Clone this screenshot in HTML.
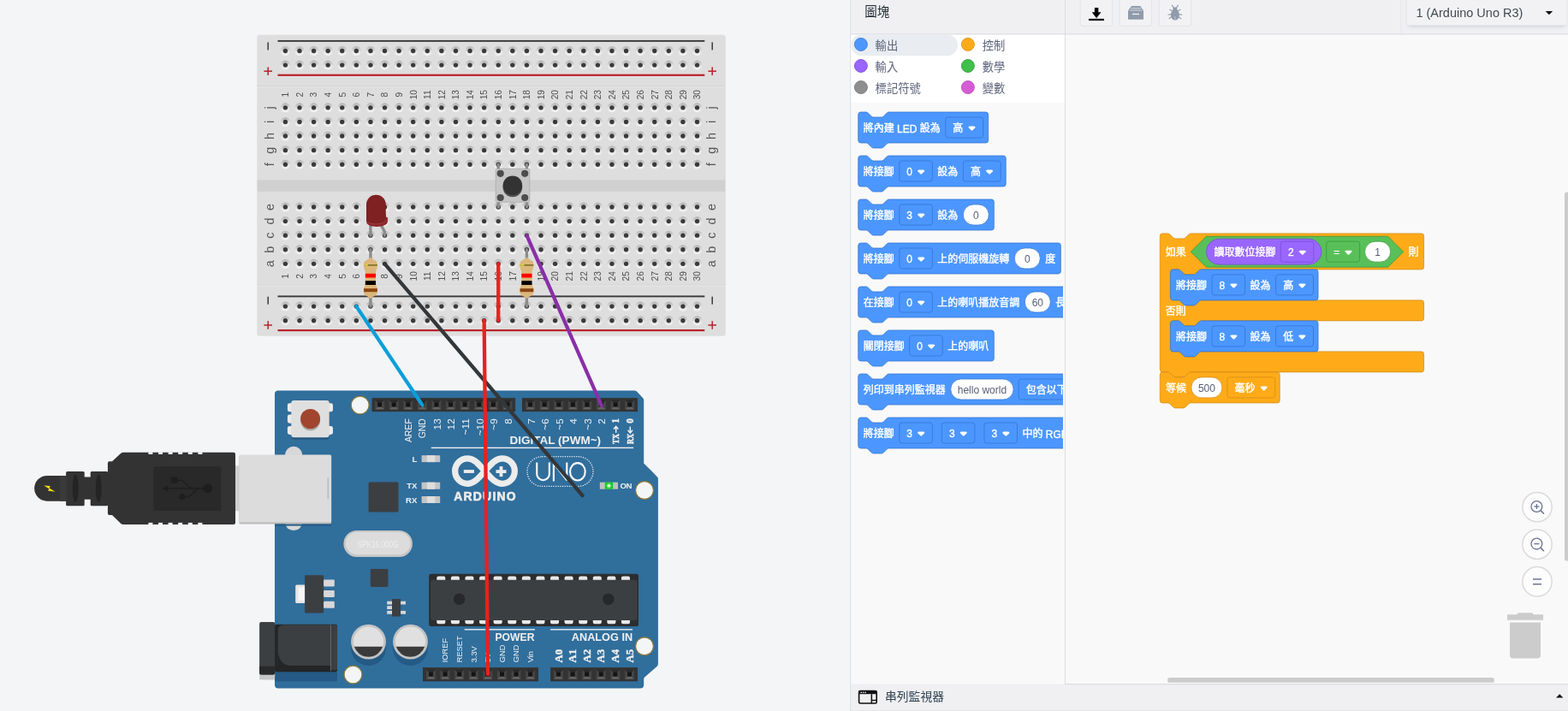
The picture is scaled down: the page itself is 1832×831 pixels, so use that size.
<!DOCTYPE html><html><head><meta charset="utf-8"><title>Circuit</title><style>html,body{margin:0;padding:0;background:#f4f5f7;overflow:hidden}svg{display:block;will-change:transform}text{font-family:"Liberation Sans","Noto Sans CJK TC",sans-serif}</style></head><body><svg width="1832" height="831" viewBox="0 0 1832 831"><rect width="1832" height="831" fill="#f4f5f7"/><defs><linearGradient id="hg" x1="0" y1="0" x2="0" y2="1"><stop offset="0" stop-color="#b2b2b2"/><stop offset="0.42" stop-color="#d4d4d4"/><stop offset="0.58" stop-color="#e6e6e6"/><stop offset="1" stop-color="#f5f5f5"/></linearGradient><g id="hole"><circle r="5.5" fill="url(#hg)"/><circle r="2.7" fill="#3a3a3a"/></g><g id="hrow"><use href="#hole" x="333.4"/><use href="#hole" x="349.99"/><use href="#hole" x="366.58"/><use href="#hole" x="383.17"/><use href="#hole" x="399.76"/><use href="#hole" x="416.35"/><use href="#hole" x="432.94"/><use href="#hole" x="449.53"/><use href="#hole" x="466.12"/><use href="#hole" x="482.71"/><use href="#hole" x="499.3"/><use href="#hole" x="515.89"/><use href="#hole" x="532.48"/><use href="#hole" x="549.07"/><use href="#hole" x="565.66"/><use href="#hole" x="582.25"/><use href="#hole" x="598.84"/><use href="#hole" x="615.43"/><use href="#hole" x="632.02"/><use href="#hole" x="648.61"/><use href="#hole" x="665.2"/><use href="#hole" x="681.79"/><use href="#hole" x="698.38"/><use href="#hole" x="714.97"/><use href="#hole" x="731.56"/><use href="#hole" x="748.15"/><use href="#hole" x="764.74"/><use href="#hole" x="781.33"/><use href="#hole" x="797.92"/><use href="#hole" x="814.51"/></g></defs><rect x="300" y="40.5" width="548" height="352.5" rx="3.5" fill="#e6e6e7"/><rect x="300.7" y="41.2" width="546.6" height="351.1" rx="3" fill="#dedede"/><rect x="300.7" y="210.2" width="546.6" height="13.6" fill="#d0d0d0"/><rect x="300.7" y="100" width="546.6" height="1" fill="#d3d3d3"/><rect x="300.7" y="101" width="546.6" height="1" fill="#e6e6e6"/><rect x="300.7" y="332.5" width="546.6" height="1" fill="#d3d3d3"/><rect x="300.7" y="333.5" width="546.6" height="1" fill="#e6e6e6"/><rect x="324.5" y="46.95" width="498.8" height="1.9" fill="#3a3a3a"/><rect x="324.5" y="86.7" width="498.8" height="2.2" fill="#b8232b"/><rect x="324.5" y="345.45" width="498.8" height="1.9" fill="#3a3a3a"/><rect x="324.5" y="385" width="498.8" height="2.2" fill="#b8232b"/><rect x="312.45" y="49.4" width="1.5" height="9" fill="#3a3a3a"/><rect x="312.45" y="78.4" width="1.5" height="9.6" fill="#b8232b"/><rect x="308.4" y="82.45" width="9.6" height="1.5" fill="#b8232b"/><rect x="312.45" y="346.7" width="1.5" height="9" fill="#3a3a3a"/><rect x="312.45" y="375.2" width="1.5" height="9.6" fill="#b8232b"/><rect x="308.4" y="379.25" width="9.6" height="1.5" fill="#b8232b"/><rect x="831.45" y="49.4" width="1.5" height="9" fill="#3a3a3a"/><rect x="831.45" y="78.4" width="1.5" height="9.6" fill="#b8232b"/><rect x="827.4" y="82.45" width="9.6" height="1.5" fill="#b8232b"/><rect x="831.45" y="346.7" width="1.5" height="9" fill="#3a3a3a"/><rect x="831.45" y="375.2" width="1.5" height="9.6" fill="#b8232b"/><rect x="827.4" y="379.25" width="9.6" height="1.5" fill="#b8232b"/><use href="#hrow" y="59.5"/><use href="#hrow" y="76.09"/><use href="#hrow" y="125.86"/><use href="#hrow" y="142.45"/><use href="#hrow" y="159.04"/><use href="#hrow" y="175.63"/><use href="#hrow" y="192.22"/><use href="#hrow" y="241.99"/><use href="#hrow" y="258.58"/><use href="#hrow" y="275.17"/><use href="#hrow" y="291.76"/><use href="#hrow" y="308.35"/><use href="#hrow" y="358.12"/><use href="#hrow" y="374.71"/><text transform="translate(337.2,110.7) rotate(-90)" font-size="10.2" fill="#505050" text-anchor="middle">1</text><text transform="translate(353.79,110.7) rotate(-90)" font-size="10.2" fill="#505050" text-anchor="middle">2</text><text transform="translate(370.38,110.7) rotate(-90)" font-size="10.2" fill="#505050" text-anchor="middle">3</text><text transform="translate(386.97,110.7) rotate(-90)" font-size="10.2" fill="#505050" text-anchor="middle">4</text><text transform="translate(403.56,110.7) rotate(-90)" font-size="10.2" fill="#505050" text-anchor="middle">5</text><text transform="translate(420.15,110.7) rotate(-90)" font-size="10.2" fill="#505050" text-anchor="middle">6</text><text transform="translate(436.74,110.7) rotate(-90)" font-size="10.2" fill="#505050" text-anchor="middle">7</text><text transform="translate(453.33,110.7) rotate(-90)" font-size="10.2" fill="#505050" text-anchor="middle">8</text><text transform="translate(469.92,110.7) rotate(-90)" font-size="10.2" fill="#505050" text-anchor="middle">9</text><text transform="translate(486.51,110.7) rotate(-90)" font-size="10.2" fill="#505050" text-anchor="middle">10</text><text transform="translate(503.1,110.7) rotate(-90)" font-size="10.2" fill="#505050" text-anchor="middle">11</text><text transform="translate(519.69,110.7) rotate(-90)" font-size="10.2" fill="#505050" text-anchor="middle">12</text><text transform="translate(536.28,110.7) rotate(-90)" font-size="10.2" fill="#505050" text-anchor="middle">13</text><text transform="translate(552.87,110.7) rotate(-90)" font-size="10.2" fill="#505050" text-anchor="middle">14</text><text transform="translate(569.46,110.7) rotate(-90)" font-size="10.2" fill="#505050" text-anchor="middle">15</text><text transform="translate(586.05,110.7) rotate(-90)" font-size="10.2" fill="#505050" text-anchor="middle">16</text><text transform="translate(602.64,110.7) rotate(-90)" font-size="10.2" fill="#505050" text-anchor="middle">17</text><text transform="translate(619.23,110.7) rotate(-90)" font-size="10.2" fill="#505050" text-anchor="middle">18</text><text transform="translate(635.82,110.7) rotate(-90)" font-size="10.2" fill="#505050" text-anchor="middle">19</text><text transform="translate(652.41,110.7) rotate(-90)" font-size="10.2" fill="#505050" text-anchor="middle">20</text><text transform="translate(669,110.7) rotate(-90)" font-size="10.2" fill="#505050" text-anchor="middle">21</text><text transform="translate(685.59,110.7) rotate(-90)" font-size="10.2" fill="#505050" text-anchor="middle">22</text><text transform="translate(702.18,110.7) rotate(-90)" font-size="10.2" fill="#505050" text-anchor="middle">23</text><text transform="translate(718.77,110.7) rotate(-90)" font-size="10.2" fill="#505050" text-anchor="middle">24</text><text transform="translate(735.36,110.7) rotate(-90)" font-size="10.2" fill="#505050" text-anchor="middle">25</text><text transform="translate(751.95,110.7) rotate(-90)" font-size="10.2" fill="#505050" text-anchor="middle">26</text><text transform="translate(768.54,110.7) rotate(-90)" font-size="10.2" fill="#505050" text-anchor="middle">27</text><text transform="translate(785.13,110.7) rotate(-90)" font-size="10.2" fill="#505050" text-anchor="middle">28</text><text transform="translate(801.72,110.7) rotate(-90)" font-size="10.2" fill="#505050" text-anchor="middle">29</text><text transform="translate(818.31,110.7) rotate(-90)" font-size="10.2" fill="#505050" text-anchor="middle">30</text><text transform="translate(337.2,322.8) rotate(-90)" font-size="10.2" fill="#505050" text-anchor="middle">1</text><text transform="translate(353.79,322.8) rotate(-90)" font-size="10.2" fill="#505050" text-anchor="middle">2</text><text transform="translate(370.38,322.8) rotate(-90)" font-size="10.2" fill="#505050" text-anchor="middle">3</text><text transform="translate(386.97,322.8) rotate(-90)" font-size="10.2" fill="#505050" text-anchor="middle">4</text><text transform="translate(403.56,322.8) rotate(-90)" font-size="10.2" fill="#505050" text-anchor="middle">5</text><text transform="translate(420.15,322.8) rotate(-90)" font-size="10.2" fill="#505050" text-anchor="middle">6</text><text transform="translate(436.74,322.8) rotate(-90)" font-size="10.2" fill="#505050" text-anchor="middle">7</text><text transform="translate(453.33,322.8) rotate(-90)" font-size="10.2" fill="#505050" text-anchor="middle">8</text><text transform="translate(469.92,322.8) rotate(-90)" font-size="10.2" fill="#505050" text-anchor="middle">9</text><text transform="translate(486.51,322.8) rotate(-90)" font-size="10.2" fill="#505050" text-anchor="middle">10</text><text transform="translate(503.1,322.8) rotate(-90)" font-size="10.2" fill="#505050" text-anchor="middle">11</text><text transform="translate(519.69,322.8) rotate(-90)" font-size="10.2" fill="#505050" text-anchor="middle">12</text><text transform="translate(536.28,322.8) rotate(-90)" font-size="10.2" fill="#505050" text-anchor="middle">13</text><text transform="translate(552.87,322.8) rotate(-90)" font-size="10.2" fill="#505050" text-anchor="middle">14</text><text transform="translate(569.46,322.8) rotate(-90)" font-size="10.2" fill="#505050" text-anchor="middle">15</text><text transform="translate(586.05,322.8) rotate(-90)" font-size="10.2" fill="#505050" text-anchor="middle">16</text><text transform="translate(602.64,322.8) rotate(-90)" font-size="10.2" fill="#505050" text-anchor="middle">17</text><text transform="translate(619.23,322.8) rotate(-90)" font-size="10.2" fill="#505050" text-anchor="middle">18</text><text transform="translate(635.82,322.8) rotate(-90)" font-size="10.2" fill="#505050" text-anchor="middle">19</text><text transform="translate(652.41,322.8) rotate(-90)" font-size="10.2" fill="#505050" text-anchor="middle">20</text><text transform="translate(669,322.8) rotate(-90)" font-size="10.2" fill="#505050" text-anchor="middle">21</text><text transform="translate(685.59,322.8) rotate(-90)" font-size="10.2" fill="#505050" text-anchor="middle">22</text><text transform="translate(702.18,322.8) rotate(-90)" font-size="10.2" fill="#505050" text-anchor="middle">23</text><text transform="translate(718.77,322.8) rotate(-90)" font-size="10.2" fill="#505050" text-anchor="middle">24</text><text transform="translate(735.36,322.8) rotate(-90)" font-size="10.2" fill="#505050" text-anchor="middle">25</text><text transform="translate(751.95,322.8) rotate(-90)" font-size="10.2" fill="#505050" text-anchor="middle">26</text><text transform="translate(768.54,322.8) rotate(-90)" font-size="10.2" fill="#505050" text-anchor="middle">27</text><text transform="translate(785.13,322.8) rotate(-90)" font-size="10.2" fill="#505050" text-anchor="middle">28</text><text transform="translate(801.72,322.8) rotate(-90)" font-size="10.2" fill="#505050" text-anchor="middle">29</text><text transform="translate(818.31,322.8) rotate(-90)" font-size="10.2" fill="#505050" text-anchor="middle">30</text><text transform="translate(320.2,125.86) rotate(-90)" font-size="14.4" fill="#555555" text-anchor="middle">j</text><text transform="translate(835.8,125.86) rotate(-90)" font-size="14.4" fill="#555555" text-anchor="middle">j</text><text transform="translate(320.2,142.45) rotate(-90)" font-size="14.4" fill="#555555" text-anchor="middle">i</text><text transform="translate(835.8,142.45) rotate(-90)" font-size="14.4" fill="#555555" text-anchor="middle">i</text><text transform="translate(320.2,159.04) rotate(-90)" font-size="14.4" fill="#555555" text-anchor="middle">h</text><text transform="translate(835.8,159.04) rotate(-90)" font-size="14.4" fill="#555555" text-anchor="middle">h</text><text transform="translate(320.2,175.63) rotate(-90)" font-size="14.4" fill="#555555" text-anchor="middle">g</text><text transform="translate(835.8,175.63) rotate(-90)" font-size="14.4" fill="#555555" text-anchor="middle">g</text><text transform="translate(320.2,192.22) rotate(-90)" font-size="14.4" fill="#555555" text-anchor="middle">f</text><text transform="translate(835.8,192.22) rotate(-90)" font-size="14.4" fill="#555555" text-anchor="middle">f</text><text transform="translate(320.2,241.99) rotate(-90)" font-size="14.4" fill="#555555" text-anchor="middle">e</text><text transform="translate(835.8,241.99) rotate(-90)" font-size="14.4" fill="#555555" text-anchor="middle">e</text><text transform="translate(320.2,258.58) rotate(-90)" font-size="14.4" fill="#555555" text-anchor="middle">d</text><text transform="translate(835.8,258.58) rotate(-90)" font-size="14.4" fill="#555555" text-anchor="middle">d</text><text transform="translate(320.2,275.17) rotate(-90)" font-size="14.4" fill="#555555" text-anchor="middle">c</text><text transform="translate(835.8,275.17) rotate(-90)" font-size="14.4" fill="#555555" text-anchor="middle">c</text><text transform="translate(320.2,291.76) rotate(-90)" font-size="14.4" fill="#555555" text-anchor="middle">b</text><text transform="translate(835.8,291.76) rotate(-90)" font-size="14.4" fill="#555555" text-anchor="middle">b</text><text transform="translate(320.2,308.35) rotate(-90)" font-size="14.4" fill="#555555" text-anchor="middle">a</text><text transform="translate(835.8,308.35) rotate(-90)" font-size="14.4" fill="#555555" text-anchor="middle">a</text><path d="M432.94,262 V275.17" stroke="#8c8c8c" stroke-width="3.3" stroke-linecap="round" fill="none"/><path d="M444.6,262 L449.33,270.6 V275.17" stroke="#8c8c8c" stroke-width="3.3" stroke-linecap="round" stroke-linejoin="round" fill="none"/><path d="M428,250 H450.8 V253.8 H452 Q452.9,253.8 452.9,254.8 V259 C452.9,262.5 447,264.9 440.2,264.9 C433,264.9 428,262.5 428,259Z" fill="#8d2529"/><path d="M428,257.5 V239.1 A11.4,11.4 0 0 1 450.8,239.1 V256.5 C450.8,259.8 446,261.7 439.6,261.7 C433,261.7 428,260.1 428,257.5Z" fill="#7f2022"/><path d="M428.2,257.6 C428.4,260.2 433,261.9 439.6,261.9 C446,261.9 450.6,260 450.8,256.6" fill="none" stroke="#a6474a" stroke-width="0.8"/><line x1="432.94" y1="291.76" x2="432.94" y2="358.12" stroke="#8c8c8c" stroke-width="3.4" stroke-linecap="round"/><path d="M432.94,300.4 C434.94,303.4 440.84,303.9 440.84,307.9 L440.84,311.9 C440.84,314.4 439.04,315.9 439.04,317.9 L439.04,331.7 C439.04,333.7 440.84,335.2 440.84,337.7 L440.84,341.7 C440.84,345.7 434.94,346.2 432.94,349.2 C430.94,346.2 425.04,345.7 425.04,341.7 L425.04,337.7 C425.04,335.2 426.84,333.7 426.84,331.7 L426.84,317.9 C426.84,315.9 425.04,314.4 425.04,311.9 L425.04,307.9 C425.04,303.9 430.94,303.4 432.94,300.4Z" fill="#dcb77a"/><rect x="425.04" y="309" width="15.8" height="1.8" fill="#85772e"/><rect x="425.04" y="309" width="5" height="1.8" fill="#d8c840"/><rect x="426.84" y="319.8" width="12.2" height="4.7" fill="#ff0000"/><rect x="426.84" y="328.2" width="12.2" height="4.8" fill="#000"/><rect x="425.04" y="337.2" width="15.8" height="4" fill="#8b4513"/><line x1="615.43" y1="291.76" x2="615.43" y2="358.12" stroke="#8c8c8c" stroke-width="3.4" stroke-linecap="round"/><path d="M615.43,300.4 C617.43,303.4 623.33,303.9 623.33,307.9 L623.33,311.9 C623.33,314.4 621.53,315.9 621.53,317.9 L621.53,331.7 C621.53,333.7 623.33,335.2 623.33,337.7 L623.33,341.7 C623.33,345.7 617.43,346.2 615.43,349.2 C613.43,346.2 607.53,345.7 607.53,341.7 L607.53,337.7 C607.53,335.2 609.33,333.7 609.33,331.7 L609.33,317.9 C609.33,315.9 607.53,314.4 607.53,311.9 L607.53,307.9 C607.53,303.9 613.43,303.4 615.43,300.4Z" fill="#dcb77a"/><rect x="607.53" y="309" width="15.8" height="1.8" fill="#85772e"/><rect x="607.53" y="309" width="5" height="1.8" fill="#d8c840"/><rect x="609.33" y="319.8" width="12.2" height="4.7" fill="#ff0000"/><rect x="609.33" y="328.2" width="12.2" height="4.8" fill="#000"/><rect x="607.53" y="337.2" width="15.8" height="4" fill="#8b4513"/><line x1="582.25" y1="192.22" x2="582.25" y2="241.99" stroke="#8c8c8c" stroke-width="3.4" stroke-linecap="round"/><line x1="615.43" y1="192.22" x2="615.43" y2="241.99" stroke="#8c8c8c" stroke-width="3.4" stroke-linecap="round"/><rect x="579.2" y="197.3" width="39.6" height="39" rx="1.5" fill="#c6c6c6" stroke="#aaaaaa" stroke-width="0.8"/><circle cx="584.7" cy="202.8" r="4.1" fill="#4d4d4d"/><circle cx="584.7" cy="231" r="4.1" fill="#4d4d4d"/><circle cx="613.2" cy="202.8" r="4.1" fill="#4d4d4d"/><circle cx="613.2" cy="231" r="4.1" fill="#4d4d4d"/><circle cx="598.9" cy="218.9" r="11.3" fill="#4f4f4f"/><circle cx="598.9" cy="216.7" r="11.3" fill="#333333"/><path d="M325,456.6 H741.5 Q743,456.6 744,457.6 L751.2,465.3 Q752.2,466.4 752.2,468 V541.4 L768,557.4 Q768.9,558.3 768.9,559.6 V776 Q768.9,777.4 768,778.4 L753.2,791.4 Q752.2,792.3 752.2,793.6 V800.4 Q752.2,804.4 748.2,804.4 H325 Q321,804.4 321,800.4 V460.3 Q321,456.6 325,456.6Z" fill="#306e9c"/><circle cx="420.7" cy="473.5" r="10.4" fill="#f4f5f7" stroke="#8c7a38" stroke-width="1.1"/><circle cx="753" cy="573" r="10.4" fill="#f4f5f7" stroke="#8c7a38" stroke-width="1.1"/><circle cx="753" cy="755.3" r="10.4" fill="#f4f5f7" stroke="#8c7a38" stroke-width="1.1"/><circle cx="412.5" cy="788.5" r="10.4" fill="#f4f5f7" stroke="#8c7a38" stroke-width="1.1"/><rect x="434.5" y="465.1" width="167.6" height="16" fill="#333333"/><g transform="translate(443.6,473.1)"><path d="M-5.5,-5.5 H5.5 L2.4,-2.4 H-2.4Z" fill="#2a2a2a"/><path d="M-5.5,5.5 H5.5 L2.4,2.4 H-2.4Z" fill="#636363"/><path d="M-5.5,-5.5 V5.5 L-2.4,2.4 V-2.4Z" fill="#454545"/><path d="M5.5,-5.5 V5.5 L2.4,2.4 V-2.4Z" fill="#454545"/><rect x="-2.4" y="-2.4" width="4.8" height="4.8" fill="#141414"/></g><g transform="translate(460.19,473.1)"><path d="M-5.5,-5.5 H5.5 L2.4,-2.4 H-2.4Z" fill="#2a2a2a"/><path d="M-5.5,5.5 H5.5 L2.4,2.4 H-2.4Z" fill="#636363"/><path d="M-5.5,-5.5 V5.5 L-2.4,2.4 V-2.4Z" fill="#454545"/><path d="M5.5,-5.5 V5.5 L2.4,2.4 V-2.4Z" fill="#454545"/><rect x="-2.4" y="-2.4" width="4.8" height="4.8" fill="#141414"/></g><g transform="translate(476.78,473.1)"><path d="M-5.5,-5.5 H5.5 L2.4,-2.4 H-2.4Z" fill="#2a2a2a"/><path d="M-5.5,5.5 H5.5 L2.4,2.4 H-2.4Z" fill="#636363"/><path d="M-5.5,-5.5 V5.5 L-2.4,2.4 V-2.4Z" fill="#454545"/><path d="M5.5,-5.5 V5.5 L2.4,2.4 V-2.4Z" fill="#454545"/><rect x="-2.4" y="-2.4" width="4.8" height="4.8" fill="#141414"/></g><g transform="translate(493.37,473.1)"><path d="M-5.5,-5.5 H5.5 L2.4,-2.4 H-2.4Z" fill="#2a2a2a"/><path d="M-5.5,5.5 H5.5 L2.4,2.4 H-2.4Z" fill="#636363"/><path d="M-5.5,-5.5 V5.5 L-2.4,2.4 V-2.4Z" fill="#454545"/><path d="M5.5,-5.5 V5.5 L2.4,2.4 V-2.4Z" fill="#454545"/><rect x="-2.4" y="-2.4" width="4.8" height="4.8" fill="#141414"/></g><g transform="translate(509.96,473.1)"><path d="M-5.5,-5.5 H5.5 L2.4,-2.4 H-2.4Z" fill="#2a2a2a"/><path d="M-5.5,5.5 H5.5 L2.4,2.4 H-2.4Z" fill="#636363"/><path d="M-5.5,-5.5 V5.5 L-2.4,2.4 V-2.4Z" fill="#454545"/><path d="M5.5,-5.5 V5.5 L2.4,2.4 V-2.4Z" fill="#454545"/><rect x="-2.4" y="-2.4" width="4.8" height="4.8" fill="#141414"/></g><g transform="translate(526.55,473.1)"><path d="M-5.5,-5.5 H5.5 L2.4,-2.4 H-2.4Z" fill="#2a2a2a"/><path d="M-5.5,5.5 H5.5 L2.4,2.4 H-2.4Z" fill="#636363"/><path d="M-5.5,-5.5 V5.5 L-2.4,2.4 V-2.4Z" fill="#454545"/><path d="M5.5,-5.5 V5.5 L2.4,2.4 V-2.4Z" fill="#454545"/><rect x="-2.4" y="-2.4" width="4.8" height="4.8" fill="#141414"/></g><g transform="translate(543.14,473.1)"><path d="M-5.5,-5.5 H5.5 L2.4,-2.4 H-2.4Z" fill="#2a2a2a"/><path d="M-5.5,5.5 H5.5 L2.4,2.4 H-2.4Z" fill="#636363"/><path d="M-5.5,-5.5 V5.5 L-2.4,2.4 V-2.4Z" fill="#454545"/><path d="M5.5,-5.5 V5.5 L2.4,2.4 V-2.4Z" fill="#454545"/><rect x="-2.4" y="-2.4" width="4.8" height="4.8" fill="#141414"/></g><g transform="translate(559.73,473.1)"><path d="M-5.5,-5.5 H5.5 L2.4,-2.4 H-2.4Z" fill="#2a2a2a"/><path d="M-5.5,5.5 H5.5 L2.4,2.4 H-2.4Z" fill="#636363"/><path d="M-5.5,-5.5 V5.5 L-2.4,2.4 V-2.4Z" fill="#454545"/><path d="M5.5,-5.5 V5.5 L2.4,2.4 V-2.4Z" fill="#454545"/><rect x="-2.4" y="-2.4" width="4.8" height="4.8" fill="#141414"/></g><g transform="translate(576.32,473.1)"><path d="M-5.5,-5.5 H5.5 L2.4,-2.4 H-2.4Z" fill="#2a2a2a"/><path d="M-5.5,5.5 H5.5 L2.4,2.4 H-2.4Z" fill="#636363"/><path d="M-5.5,-5.5 V5.5 L-2.4,2.4 V-2.4Z" fill="#454545"/><path d="M5.5,-5.5 V5.5 L2.4,2.4 V-2.4Z" fill="#454545"/><rect x="-2.4" y="-2.4" width="4.8" height="4.8" fill="#141414"/></g><g transform="translate(592.91,473.1)"><path d="M-5.5,-5.5 H5.5 L2.4,-2.4 H-2.4Z" fill="#2a2a2a"/><path d="M-5.5,5.5 H5.5 L2.4,2.4 H-2.4Z" fill="#636363"/><path d="M-5.5,-5.5 V5.5 L-2.4,2.4 V-2.4Z" fill="#454545"/><path d="M5.5,-5.5 V5.5 L2.4,2.4 V-2.4Z" fill="#454545"/><rect x="-2.4" y="-2.4" width="4.8" height="4.8" fill="#141414"/></g><rect x="610" y="465.1" width="135" height="16" fill="#333333"/><g transform="translate(619.6,473.1)"><path d="M-5.5,-5.5 H5.5 L2.4,-2.4 H-2.4Z" fill="#2a2a2a"/><path d="M-5.5,5.5 H5.5 L2.4,2.4 H-2.4Z" fill="#636363"/><path d="M-5.5,-5.5 V5.5 L-2.4,2.4 V-2.4Z" fill="#454545"/><path d="M5.5,-5.5 V5.5 L2.4,2.4 V-2.4Z" fill="#454545"/><rect x="-2.4" y="-2.4" width="4.8" height="4.8" fill="#141414"/></g><g transform="translate(636.19,473.1)"><path d="M-5.5,-5.5 H5.5 L2.4,-2.4 H-2.4Z" fill="#2a2a2a"/><path d="M-5.5,5.5 H5.5 L2.4,2.4 H-2.4Z" fill="#636363"/><path d="M-5.5,-5.5 V5.5 L-2.4,2.4 V-2.4Z" fill="#454545"/><path d="M5.5,-5.5 V5.5 L2.4,2.4 V-2.4Z" fill="#454545"/><rect x="-2.4" y="-2.4" width="4.8" height="4.8" fill="#141414"/></g><g transform="translate(652.78,473.1)"><path d="M-5.5,-5.5 H5.5 L2.4,-2.4 H-2.4Z" fill="#2a2a2a"/><path d="M-5.5,5.5 H5.5 L2.4,2.4 H-2.4Z" fill="#636363"/><path d="M-5.5,-5.5 V5.5 L-2.4,2.4 V-2.4Z" fill="#454545"/><path d="M5.5,-5.5 V5.5 L2.4,2.4 V-2.4Z" fill="#454545"/><rect x="-2.4" y="-2.4" width="4.8" height="4.8" fill="#141414"/></g><g transform="translate(669.37,473.1)"><path d="M-5.5,-5.5 H5.5 L2.4,-2.4 H-2.4Z" fill="#2a2a2a"/><path d="M-5.5,5.5 H5.5 L2.4,2.4 H-2.4Z" fill="#636363"/><path d="M-5.5,-5.5 V5.5 L-2.4,2.4 V-2.4Z" fill="#454545"/><path d="M5.5,-5.5 V5.5 L2.4,2.4 V-2.4Z" fill="#454545"/><rect x="-2.4" y="-2.4" width="4.8" height="4.8" fill="#141414"/></g><g transform="translate(685.96,473.1)"><path d="M-5.5,-5.5 H5.5 L2.4,-2.4 H-2.4Z" fill="#2a2a2a"/><path d="M-5.5,5.5 H5.5 L2.4,2.4 H-2.4Z" fill="#636363"/><path d="M-5.5,-5.5 V5.5 L-2.4,2.4 V-2.4Z" fill="#454545"/><path d="M5.5,-5.5 V5.5 L2.4,2.4 V-2.4Z" fill="#454545"/><rect x="-2.4" y="-2.4" width="4.8" height="4.8" fill="#141414"/></g><g transform="translate(702.55,473.1)"><path d="M-5.5,-5.5 H5.5 L2.4,-2.4 H-2.4Z" fill="#2a2a2a"/><path d="M-5.5,5.5 H5.5 L2.4,2.4 H-2.4Z" fill="#636363"/><path d="M-5.5,-5.5 V5.5 L-2.4,2.4 V-2.4Z" fill="#454545"/><path d="M5.5,-5.5 V5.5 L2.4,2.4 V-2.4Z" fill="#454545"/><rect x="-2.4" y="-2.4" width="4.8" height="4.8" fill="#141414"/></g><g transform="translate(719.14,473.1)"><path d="M-5.5,-5.5 H5.5 L2.4,-2.4 H-2.4Z" fill="#2a2a2a"/><path d="M-5.5,5.5 H5.5 L2.4,2.4 H-2.4Z" fill="#636363"/><path d="M-5.5,-5.5 V5.5 L-2.4,2.4 V-2.4Z" fill="#454545"/><path d="M5.5,-5.5 V5.5 L2.4,2.4 V-2.4Z" fill="#454545"/><rect x="-2.4" y="-2.4" width="4.8" height="4.8" fill="#141414"/></g><g transform="translate(735.73,473.1)"><path d="M-5.5,-5.5 H5.5 L2.4,-2.4 H-2.4Z" fill="#2a2a2a"/><path d="M-5.5,5.5 H5.5 L2.4,2.4 H-2.4Z" fill="#636363"/><path d="M-5.5,-5.5 V5.5 L-2.4,2.4 V-2.4Z" fill="#454545"/><path d="M5.5,-5.5 V5.5 L2.4,2.4 V-2.4Z" fill="#454545"/><rect x="-2.4" y="-2.4" width="4.8" height="4.8" fill="#141414"/></g><rect x="494" y="780.1" width="135" height="16.2" fill="#333333"/><g transform="translate(503.5,788.2)"><path d="M-5.5,-5.5 H5.5 L2.4,-2.4 H-2.4Z" fill="#2a2a2a"/><path d="M-5.5,5.5 H5.5 L2.4,2.4 H-2.4Z" fill="#636363"/><path d="M-5.5,-5.5 V5.5 L-2.4,2.4 V-2.4Z" fill="#454545"/><path d="M5.5,-5.5 V5.5 L2.4,2.4 V-2.4Z" fill="#454545"/><rect x="-2.4" y="-2.4" width="4.8" height="4.8" fill="#141414"/></g><g transform="translate(520.09,788.2)"><path d="M-5.5,-5.5 H5.5 L2.4,-2.4 H-2.4Z" fill="#2a2a2a"/><path d="M-5.5,5.5 H5.5 L2.4,2.4 H-2.4Z" fill="#636363"/><path d="M-5.5,-5.5 V5.5 L-2.4,2.4 V-2.4Z" fill="#454545"/><path d="M5.5,-5.5 V5.5 L2.4,2.4 V-2.4Z" fill="#454545"/><rect x="-2.4" y="-2.4" width="4.8" height="4.8" fill="#141414"/></g><g transform="translate(536.68,788.2)"><path d="M-5.5,-5.5 H5.5 L2.4,-2.4 H-2.4Z" fill="#2a2a2a"/><path d="M-5.5,5.5 H5.5 L2.4,2.4 H-2.4Z" fill="#636363"/><path d="M-5.5,-5.5 V5.5 L-2.4,2.4 V-2.4Z" fill="#454545"/><path d="M5.5,-5.5 V5.5 L2.4,2.4 V-2.4Z" fill="#454545"/><rect x="-2.4" y="-2.4" width="4.8" height="4.8" fill="#141414"/></g><g transform="translate(553.27,788.2)"><path d="M-5.5,-5.5 H5.5 L2.4,-2.4 H-2.4Z" fill="#2a2a2a"/><path d="M-5.5,5.5 H5.5 L2.4,2.4 H-2.4Z" fill="#636363"/><path d="M-5.5,-5.5 V5.5 L-2.4,2.4 V-2.4Z" fill="#454545"/><path d="M5.5,-5.5 V5.5 L2.4,2.4 V-2.4Z" fill="#454545"/><rect x="-2.4" y="-2.4" width="4.8" height="4.8" fill="#141414"/></g><g transform="translate(569.86,788.2)"><path d="M-5.5,-5.5 H5.5 L2.4,-2.4 H-2.4Z" fill="#2a2a2a"/><path d="M-5.5,5.5 H5.5 L2.4,2.4 H-2.4Z" fill="#636363"/><path d="M-5.5,-5.5 V5.5 L-2.4,2.4 V-2.4Z" fill="#454545"/><path d="M5.5,-5.5 V5.5 L2.4,2.4 V-2.4Z" fill="#454545"/><rect x="-2.4" y="-2.4" width="4.8" height="4.8" fill="#141414"/></g><g transform="translate(586.45,788.2)"><path d="M-5.5,-5.5 H5.5 L2.4,-2.4 H-2.4Z" fill="#2a2a2a"/><path d="M-5.5,5.5 H5.5 L2.4,2.4 H-2.4Z" fill="#636363"/><path d="M-5.5,-5.5 V5.5 L-2.4,2.4 V-2.4Z" fill="#454545"/><path d="M5.5,-5.5 V5.5 L2.4,2.4 V-2.4Z" fill="#454545"/><rect x="-2.4" y="-2.4" width="4.8" height="4.8" fill="#141414"/></g><g transform="translate(603.04,788.2)"><path d="M-5.5,-5.5 H5.5 L2.4,-2.4 H-2.4Z" fill="#2a2a2a"/><path d="M-5.5,5.5 H5.5 L2.4,2.4 H-2.4Z" fill="#636363"/><path d="M-5.5,-5.5 V5.5 L-2.4,2.4 V-2.4Z" fill="#454545"/><path d="M5.5,-5.5 V5.5 L2.4,2.4 V-2.4Z" fill="#454545"/><rect x="-2.4" y="-2.4" width="4.8" height="4.8" fill="#141414"/></g><g transform="translate(619.63,788.2)"><path d="M-5.5,-5.5 H5.5 L2.4,-2.4 H-2.4Z" fill="#2a2a2a"/><path d="M-5.5,5.5 H5.5 L2.4,2.4 H-2.4Z" fill="#636363"/><path d="M-5.5,-5.5 V5.5 L-2.4,2.4 V-2.4Z" fill="#454545"/><path d="M5.5,-5.5 V5.5 L2.4,2.4 V-2.4Z" fill="#454545"/><rect x="-2.4" y="-2.4" width="4.8" height="4.8" fill="#141414"/></g><rect x="643.1" y="780.1" width="101.9" height="16.2" fill="#333333"/><g transform="translate(652.5,788.2)"><path d="M-5.5,-5.5 H5.5 L2.4,-2.4 H-2.4Z" fill="#2a2a2a"/><path d="M-5.5,5.5 H5.5 L2.4,2.4 H-2.4Z" fill="#636363"/><path d="M-5.5,-5.5 V5.5 L-2.4,2.4 V-2.4Z" fill="#454545"/><path d="M5.5,-5.5 V5.5 L2.4,2.4 V-2.4Z" fill="#454545"/><rect x="-2.4" y="-2.4" width="4.8" height="4.8" fill="#141414"/></g><g transform="translate(669.09,788.2)"><path d="M-5.5,-5.5 H5.5 L2.4,-2.4 H-2.4Z" fill="#2a2a2a"/><path d="M-5.5,5.5 H5.5 L2.4,2.4 H-2.4Z" fill="#636363"/><path d="M-5.5,-5.5 V5.5 L-2.4,2.4 V-2.4Z" fill="#454545"/><path d="M5.5,-5.5 V5.5 L2.4,2.4 V-2.4Z" fill="#454545"/><rect x="-2.4" y="-2.4" width="4.8" height="4.8" fill="#141414"/></g><g transform="translate(685.68,788.2)"><path d="M-5.5,-5.5 H5.5 L2.4,-2.4 H-2.4Z" fill="#2a2a2a"/><path d="M-5.5,5.5 H5.5 L2.4,2.4 H-2.4Z" fill="#636363"/><path d="M-5.5,-5.5 V5.5 L-2.4,2.4 V-2.4Z" fill="#454545"/><path d="M5.5,-5.5 V5.5 L2.4,2.4 V-2.4Z" fill="#454545"/><rect x="-2.4" y="-2.4" width="4.8" height="4.8" fill="#141414"/></g><g transform="translate(702.27,788.2)"><path d="M-5.5,-5.5 H5.5 L2.4,-2.4 H-2.4Z" fill="#2a2a2a"/><path d="M-5.5,5.5 H5.5 L2.4,2.4 H-2.4Z" fill="#636363"/><path d="M-5.5,-5.5 V5.5 L-2.4,2.4 V-2.4Z" fill="#454545"/><path d="M5.5,-5.5 V5.5 L2.4,2.4 V-2.4Z" fill="#454545"/><rect x="-2.4" y="-2.4" width="4.8" height="4.8" fill="#141414"/></g><g transform="translate(718.86,788.2)"><path d="M-5.5,-5.5 H5.5 L2.4,-2.4 H-2.4Z" fill="#2a2a2a"/><path d="M-5.5,5.5 H5.5 L2.4,2.4 H-2.4Z" fill="#636363"/><path d="M-5.5,-5.5 V5.5 L-2.4,2.4 V-2.4Z" fill="#454545"/><path d="M5.5,-5.5 V5.5 L2.4,2.4 V-2.4Z" fill="#454545"/><rect x="-2.4" y="-2.4" width="4.8" height="4.8" fill="#141414"/></g><g transform="translate(735.45,788.2)"><path d="M-5.5,-5.5 H5.5 L2.4,-2.4 H-2.4Z" fill="#2a2a2a"/><path d="M-5.5,5.5 H5.5 L2.4,2.4 H-2.4Z" fill="#636363"/><path d="M-5.5,-5.5 V5.5 L-2.4,2.4 V-2.4Z" fill="#454545"/><path d="M5.5,-5.5 V5.5 L2.4,2.4 V-2.4Z" fill="#454545"/><rect x="-2.4" y="-2.4" width="4.8" height="4.8" fill="#141414"/></g><text transform="translate(480.58,489.2) rotate(-90)" font-size="10.4" fill="#f0f0f0" text-anchor="end" font-weight="normal" >AREF</text><text transform="translate(497.17,489.2) rotate(-90)" font-size="10.4" fill="#f0f0f0" text-anchor="end" font-weight="normal" >GND</text><text transform="translate(514.86,489.3) rotate(-90)" font-size="11.8" fill="#f0f0f0" text-anchor="end" font-weight="normal" >13</text><text transform="translate(531.45,489.3) rotate(-90)" font-size="11.8" fill="#f0f0f0" text-anchor="end" font-weight="normal" >12</text><text transform="translate(548.04,489.3) rotate(-90)" font-size="11.8" fill="#f0f0f0" text-anchor="end" font-weight="normal" >~11</text><text transform="translate(564.63,489.3) rotate(-90)" font-size="11.8" fill="#f0f0f0" text-anchor="end" font-weight="normal" >~10</text><text transform="translate(581.22,489.3) rotate(-90)" font-size="11.8" fill="#f0f0f0" text-anchor="end" font-weight="normal" >~9</text><text transform="translate(597.81,489.3) rotate(-90)" font-size="11.8" fill="#f0f0f0" text-anchor="end" font-weight="normal" >8</text><text transform="translate(624.5,489.3) rotate(-90)" font-size="11.8" fill="#f0f0f0" text-anchor="end" font-weight="normal" >7</text><text transform="translate(641.09,489.3) rotate(-90)" font-size="11.8" fill="#f0f0f0" text-anchor="end" font-weight="normal" >~6</text><text transform="translate(657.68,489.3) rotate(-90)" font-size="11.8" fill="#f0f0f0" text-anchor="end" font-weight="normal" >~5</text><text transform="translate(674.27,489.3) rotate(-90)" font-size="11.8" fill="#f0f0f0" text-anchor="end" font-weight="normal" >4</text><text transform="translate(690.86,489.3) rotate(-90)" font-size="11.8" fill="#f0f0f0" text-anchor="end" font-weight="normal" >~3</text><text transform="translate(707.45,489.3) rotate(-90)" font-size="11.8" fill="#f0f0f0" text-anchor="end" font-weight="normal" >2</text><text transform="translate(723,519.1) rotate(-90)" font-size="11" fill="#f0f0f0" text-anchor="start" font-weight="bold" style="font-family:'Liberation Serif',serif" textLength="12.4" lengthAdjust="spacingAndGlyphs" stroke="#f0f0f0" stroke-width="0.45">TX</text><text transform="translate(723,488.9) rotate(-90)" font-size="11.6" fill="#f0f0f0" text-anchor="end" font-weight="bold" style="font-family:'Liberation Serif',serif" stroke="#f0f0f0" stroke-width="0.3">1</text><path d="M719.7,498.6 V505.8" stroke="#f0f0f0" stroke-width="1.5" fill="none"/><path d="M717,501.6 L719.7,498.4 L722.4,501.6" stroke="#f0f0f0" stroke-width="1.5" fill="none"/><text transform="translate(739.6,519.1) rotate(-90)" font-size="11" fill="#f0f0f0" text-anchor="start" font-weight="bold" style="font-family:'Liberation Serif',serif" textLength="12.4" lengthAdjust="spacingAndGlyphs" stroke="#f0f0f0" stroke-width="0.45">RX</text><text transform="translate(739.6,488.9) rotate(-90)" font-size="11.6" fill="#f0f0f0" text-anchor="end" font-weight="bold" style="font-family:'Liberation Serif',serif" stroke="#f0f0f0" stroke-width="0.3">0</text><path d="M736.3,498.6 V505.8" stroke="#f0f0f0" stroke-width="1.5" fill="none"/><path d="M733.6,502.8 L736.3,506 L739,502.8" stroke="#f0f0f0" stroke-width="1.5" fill="none"/><text x="595.5" y="518.6" font-size="12.6" font-weight="bold" fill="#f0f0f0" textLength="106.6" lengthAdjust="spacingAndGlyphs">DIGITAL (PWM~)</text><rect x="503.8" y="522.7" width="236.4" height="1.4" fill="#f0f0f0"/><rect x="492.6" y="532.2" width="21.6" height="7.9" fill="#c4c4c4"/><rect x="498.9" y="532.2" width="9.4" height="7.9" fill="#dedede"/><text x="487.4" y="539.7" font-size="9.6" font-weight="bold" fill="#f0f0f0" text-anchor="end">L</text><rect x="492.6" y="563.7" width="21.6" height="8" fill="#c4c4c4"/><rect x="498.9" y="563.7" width="9.4" height="8" fill="#dedede"/><text x="487.4" y="571.3" font-size="9.6" font-weight="bold" fill="#f0f0f0" text-anchor="end">TX</text><rect x="492.6" y="580" width="21.6" height="8" fill="#c4c4c4"/><rect x="498.9" y="580" width="9.4" height="8" fill="#dedede"/><text x="487.4" y="587.6" font-size="9.6" font-weight="bold" fill="#f0f0f0" text-anchor="end">RX</text><rect x="700.8" y="563.7" width="21.2" height="8" fill="#c0c0c0"/><rect x="706.8" y="563.7" width="9.3" height="8" fill="#12c81e"/><defs><radialGradient id="ong"><stop offset="0" stop-color="#ffffff"/><stop offset="0.35" stop-color="#b8ffb8"/><stop offset="1" stop-color="#12c81e" stop-opacity="0"/></radialGradient></defs><circle cx="711.4" cy="567.7" r="4" fill="url(#ong)"/><text x="724.4" y="571" font-size="9.6" font-weight="bold" fill="#f0f0f0" textLength="14">ON</text><path d="M566.5,550.6 C572.5,544.5 578,535.85 586.6,535.85 A14.75,14.75 0 1 1 586.6,565.35 C578,565.35 572.5,556.7 566.5,550.6 C560.5,544.5 555,535.85 546.4,535.85 A14.75,14.75 0 1 0 546.4,565.35 C555,565.35 560.5,556.7 566.5,550.6Z" fill="none" stroke="#ececec" stroke-width="7.3"/><rect x="541.8" y="549.1" width="12.1" height="3.8" fill="#ececec"/><rect x="579.5" y="549.2" width="12" height="3.8" fill="#ececec"/><rect x="583.6" y="545.1" width="3.8" height="12" fill="#ececec"/><text x="530.3" y="584.7" font-size="14" font-weight="bold" fill="#ececec" stroke="#ececec" stroke-width="0.55" textLength="72.3" lengthAdjust="spacing">ARDUINO</text><rect x="616" y="533.7" width="77" height="34.7" rx="17.35" fill="none" stroke="#f6f6f6" stroke-width="1.3" stroke-dasharray="1.2 1.45"/><g fill="none" stroke="#fcfcfc" stroke-width="2.1"><path d="M627.25,540.6 V553.95 A7.3,7.3 0 0 0 641.85,553.95 V540.6"/><path d="M646.9,562.4 V541.6 L662.3,561.4 V540.6" stroke-linejoin="bevel"/><ellipse cx="674.9" cy="551.3" rx="8.85" ry="10.15"/></g><rect x="340.8" y="470.5" width="43.9" height="43.2" rx="3" fill="#27587f"/><rect x="335.9" y="471.2" width="8" height="10.1" rx="2.4" fill="#ebebeb"/><rect x="335.9" y="484.6" width="8" height="10.1" rx="2.4" fill="#ebebeb"/><rect x="335.9" y="497.9" width="8" height="10.1" rx="2.4" fill="#ebebeb"/><rect x="381" y="471.2" width="8" height="10.1" rx="2.4" fill="#ebebeb"/><rect x="381" y="497.9" width="8" height="10.1" rx="2.4" fill="#ebebeb"/><rect x="340.3" y="468" width="44.4" height="43.2" rx="3" fill="#dfdfdf"/><circle cx="362.6" cy="491.8" r="11.5" fill="#a6a6a6"/><circle cx="362.6" cy="489.5" r="11.5" fill="#a1452e"/><rect x="430.6" y="563.4" width="34.9" height="35.2" rx="1.5" fill="#3b3f42"/><rect x="401.4" y="619.9" width="80.5" height="31.2" rx="15.6" fill="#c6c6c6"/><rect x="403.8" y="622" width="75.7" height="26.2" rx="13.1" fill="#dcdcdc"/><text x="441.6" y="639.6" font-size="10.5" fill="#efefef" text-anchor="middle" textLength="48" lengthAdjust="spacingAndGlyphs">SPK16.000G</text><rect x="432.9" y="664.9" width="20.6" height="21.1" rx="1" fill="#3b3f42"/><rect x="452.2" y="702.7" width="6" height="3.8" fill="#d8d8d8"/><rect x="452.2" y="708.2" width="6" height="3.8" fill="#d8d8d8"/><rect x="452.2" y="713.9" width="6" height="3.8" fill="#d8d8d8"/><rect x="468" y="702.7" width="6" height="3.8" fill="#d8d8d8"/><rect x="468" y="713.9" width="6" height="3.8" fill="#d8d8d8"/><rect x="458" y="700.1" width="10.1" height="20.4" fill="#3b3f42"/><rect x="345.2" y="683.4" width="12" height="21.7" rx="1.5" fill="#e6e6e6"/><rect x="348.6" y="686.5" width="8" height="15.5" fill="#f6f6f6"/><rect x="378" y="677.6" width="12.8" height="8" rx="1" fill="#d8d8d8"/><rect x="378" y="690" width="12.8" height="8" rx="1" fill="#d8d8d8"/><rect x="378" y="702.7" width="12.8" height="8" rx="1" fill="#d8d8d8"/><rect x="356.1" y="672.3" width="22" height="44.2" rx="1" fill="#3b3f42"/><circle cx="430.5" cy="757.5" r="20.4" fill="#245a85"/><circle cx="430.5" cy="750.1" r="20.4" fill="#c4c4c4"/><circle cx="430.5" cy="750.1" r="17.6" fill="#e0e0e0"/><path d="M413.81,755.7 H447.19 A17.6,17.6 0 0 1 413.81,755.7Z" fill="#3a3a3a"/><circle cx="479.5" cy="757.5" r="20.4" fill="#245a85"/><circle cx="479.5" cy="750.1" r="20.4" fill="#c4c4c4"/><circle cx="479.5" cy="750.1" r="17.6" fill="#e0e0e0"/><path d="M462.81,755.7 H496.19 A17.6,17.6 0 0 1 462.81,755.7Z" fill="#3a3a3a"/><rect x="501.2" y="670.8" width="244.8" height="61.1" rx="2.5" fill="#2b2d2f"/><rect x="510.3" y="673.5" width="10" height="6" rx="2" fill="#e8e8e8"/><rect x="510.3" y="723.2" width="10" height="6" rx="2" fill="#e8e8e8"/><rect x="526.89" y="673.5" width="10" height="6" rx="2" fill="#e8e8e8"/><rect x="526.89" y="723.2" width="10" height="6" rx="2" fill="#e8e8e8"/><rect x="543.48" y="673.5" width="10" height="6" rx="2" fill="#e8e8e8"/><rect x="543.48" y="723.2" width="10" height="6" rx="2" fill="#e8e8e8"/><rect x="560.07" y="673.5" width="10" height="6" rx="2" fill="#e8e8e8"/><rect x="560.07" y="723.2" width="10" height="6" rx="2" fill="#e8e8e8"/><rect x="576.66" y="673.5" width="10" height="6" rx="2" fill="#e8e8e8"/><rect x="576.66" y="723.2" width="10" height="6" rx="2" fill="#e8e8e8"/><rect x="593.25" y="673.5" width="10" height="6" rx="2" fill="#e8e8e8"/><rect x="593.25" y="723.2" width="10" height="6" rx="2" fill="#e8e8e8"/><rect x="609.84" y="673.5" width="10" height="6" rx="2" fill="#e8e8e8"/><rect x="609.84" y="723.2" width="10" height="6" rx="2" fill="#e8e8e8"/><rect x="626.43" y="673.5" width="10" height="6" rx="2" fill="#e8e8e8"/><rect x="626.43" y="723.2" width="10" height="6" rx="2" fill="#e8e8e8"/><rect x="643.02" y="673.5" width="10" height="6" rx="2" fill="#e8e8e8"/><rect x="643.02" y="723.2" width="10" height="6" rx="2" fill="#e8e8e8"/><rect x="659.61" y="673.5" width="10" height="6" rx="2" fill="#e8e8e8"/><rect x="659.61" y="723.2" width="10" height="6" rx="2" fill="#e8e8e8"/><rect x="676.2" y="673.5" width="10" height="6" rx="2" fill="#e8e8e8"/><rect x="676.2" y="723.2" width="10" height="6" rx="2" fill="#e8e8e8"/><rect x="692.79" y="673.5" width="10" height="6" rx="2" fill="#e8e8e8"/><rect x="692.79" y="723.2" width="10" height="6" rx="2" fill="#e8e8e8"/><rect x="709.38" y="673.5" width="10" height="6" rx="2" fill="#e8e8e8"/><rect x="709.38" y="723.2" width="10" height="6" rx="2" fill="#e8e8e8"/><rect x="725.97" y="673.5" width="10" height="6" rx="2" fill="#e8e8e8"/><rect x="725.97" y="723.2" width="10" height="6" rx="2" fill="#e8e8e8"/><rect x="503" y="677.7" width="241.6" height="47.3" rx="3" fill="#3b3f42"/><circle cx="536.6" cy="700.3" r="6.7" fill="#26282a"/><circle cx="710.8" cy="700.3" r="6.7" fill="#26282a"/><rect x="542.7" y="735.1" width="82.3" height="1.4" fill="#f0f0f0"/><rect x="643.1" y="735.1" width="96" height="1.4" fill="#f0f0f0"/><text x="624.5" y="749.4" font-size="12" font-weight="bold" fill="#f0f0f0" text-anchor="end" textLength="46" lengthAdjust="spacingAndGlyphs">POWER</text><text x="739.1" y="749.4" font-size="12" font-weight="bold" fill="#f0f0f0" text-anchor="end" textLength="71.3" lengthAdjust="spacingAndGlyphs">ANALOG IN</text><text transform="translate(523.49,774.3) rotate(-90)" font-size="9.3" fill="#f0f0f0" text-anchor="start" font-weight="normal" >IOREF</text><text transform="translate(540.08,774.3) rotate(-90)" font-size="9.3" fill="#f0f0f0" text-anchor="start" font-weight="normal" >RESET</text><text transform="translate(556.67,774.3) rotate(-90)" font-size="9.3" fill="#f0f0f0" text-anchor="start" font-weight="normal" >3.3V</text><text transform="translate(573.26,774.3) rotate(-90)" font-size="9.3" fill="#f0f0f0" text-anchor="start" font-weight="normal" >5V</text><text transform="translate(589.85,774.3) rotate(-90)" font-size="9.3" fill="#f0f0f0" text-anchor="start" font-weight="normal" >GND</text><text transform="translate(606.44,774.3) rotate(-90)" font-size="9.3" fill="#f0f0f0" text-anchor="start" font-weight="normal" >GND</text><text transform="translate(623.03,774.3) rotate(-90)" font-size="9.3" fill="#f0f0f0" text-anchor="start" font-weight="normal" >Vin</text><text transform="translate(656.7,774.5) rotate(-90)" font-size="12.4" fill="#f0f0f0" text-anchor="start" font-weight="bold" style="font-family:'Liberation Serif',serif" textLength="15.7" lengthAdjust="spacingAndGlyphs" stroke="#f0f0f0" stroke-width="0.35">A0</text><text transform="translate(673.29,774.5) rotate(-90)" font-size="12.4" fill="#f0f0f0" text-anchor="start" font-weight="bold" style="font-family:'Liberation Serif',serif" textLength="15.7" lengthAdjust="spacingAndGlyphs" stroke="#f0f0f0" stroke-width="0.35">A1</text><text transform="translate(689.88,774.5) rotate(-90)" font-size="12.4" fill="#f0f0f0" text-anchor="start" font-weight="bold" style="font-family:'Liberation Serif',serif" textLength="15.7" lengthAdjust="spacingAndGlyphs" stroke="#f0f0f0" stroke-width="0.35">A2</text><text transform="translate(706.47,774.5) rotate(-90)" font-size="12.4" fill="#f0f0f0" text-anchor="start" font-weight="bold" style="font-family:'Liberation Serif',serif" textLength="15.7" lengthAdjust="spacingAndGlyphs" stroke="#f0f0f0" stroke-width="0.35">A3</text><text transform="translate(723.06,774.5) rotate(-90)" font-size="12.4" fill="#f0f0f0" text-anchor="start" font-weight="bold" style="font-family:'Liberation Serif',serif" textLength="15.7" lengthAdjust="spacingAndGlyphs" stroke="#f0f0f0" stroke-width="0.35">A4</text><text transform="translate(739.65,774.5) rotate(-90)" font-size="12.4" fill="#f0f0f0" text-anchor="start" font-weight="bold" style="font-family:'Liberation Serif',serif" textLength="15.7" lengthAdjust="spacingAndGlyphs" stroke="#f0f0f0" stroke-width="0.35">A5</text><rect x="321" y="785" width="73" height="11.5" rx="2" fill="#245a85"/><rect x="303.1" y="786" width="18.1" height="8.6" rx="1.5" fill="#c6c6c6"/><rect x="321" y="729.7" width="73" height="55.6" rx="2" fill="#232527"/><path d="M324.6,777.9 V738.3 Q324.6,730.3 332.6,730.3 H387.3 V777.9Z" fill="#3b3f42"/><path d="M324.6,760 Q326,777.9 340,777.9 H324.6Z" fill="#232527"/><rect x="387.3" y="730.3" width="6.7" height="53" rx="2" fill="#3b3f42"/><rect x="386.1" y="730.3" width="1" height="54" fill="#6a6e70"/><rect x="303.1" y="727.1" width="18.1" height="61.4" rx="2" fill="#3b3f42"/><path d="M303.1,778.7 H321.2 V786.5 Q321.2,788.5 319.2,788.5 H305.1 Q303.1,788.5 303.1,786.5Z" fill="#27292b"/><rect x="333" y="521.7" width="20.2" height="98.4" rx="10.1" fill="#d8d8d8"/><rect x="279.4" y="533" width="107.7" height="79.6" rx="1.5" fill="#b9b9b9"/><rect x="321" y="612.6" width="66.1" height="2" fill="#265a83"/><rect x="279.4" y="531.6" width="107.7" height="78.8" rx="1.5" fill="#dcdcdc"/><rect x="275" y="544.3" width="4.6" height="53" fill="#cfcfcf"/><rect x="382.7" y="558.5" width="1" height="24.6" fill="#a8a8a8"/><path d="M55,556 H77.5 V585.7 H55 A14.85,14.85 0 0 1 55,556Z" fill="#333333"/><rect x="70" y="556" width="7.5" height="29.7" fill="#3a3a3a"/><rect x="77.1" y="551" width="21.6" height="40.2" rx="1.5" fill="#333333"/><rect x="105.7" y="551" width="20.4" height="40.2" rx="1.5" fill="#333333"/><rect x="98" y="557.5" width="8.4" height="26.2" fill="#333333"/><ellipse cx="88.2" cy="570.8" rx="3.5" ry="16" fill="#242424"/><ellipse cx="115.2" cy="570.8" rx="3.5" ry="16" fill="#242424"/><path d="M125.9,541.3 Q125.9,539.3 127.9,539.3 H131 L141,530 Q142.4,528.8 144,528.8 H273 Q275,528.8 275,530.8 V611 Q275,613 273,613 H144 Q142.4,613 141,611.8 L131,601.9 H127.9 Q125.9,601.9 125.9,599.9Z" fill="#333333"/><rect x="173.4" y="528.3" width="5" height="2.6" fill="#f4f5f7"/><rect x="173.4" y="610.9" width="5" height="2.6" fill="#f4f5f7"/><rect x="185" y="528.3" width="5" height="2.6" fill="#f4f5f7"/><rect x="185" y="610.9" width="5" height="2.6" fill="#f4f5f7"/><rect x="196.6" y="528.3" width="5" height="2.6" fill="#f4f5f7"/><rect x="196.6" y="610.9" width="5" height="2.6" fill="#f4f5f7"/><rect x="208.2" y="528.3" width="5" height="2.6" fill="#f4f5f7"/><rect x="208.2" y="610.9" width="5" height="2.6" fill="#f4f5f7"/><rect x="219.8" y="528.3" width="5" height="2.6" fill="#f4f5f7"/><rect x="219.8" y="610.9" width="5" height="2.6" fill="#f4f5f7"/><rect x="231.4" y="528.3" width="5" height="2.6" fill="#f4f5f7"/><rect x="231.4" y="610.9" width="5" height="2.6" fill="#f4f5f7"/><rect x="179.5" y="545.3" width="78.7" height="51.6" fill="#292929"/><g fill="#1e1e1e" stroke="#1e1e1e"><path d="M196,570.8 H237" stroke-width="1.4" fill="none"/><path d="M189.5,570.8 L196.5,567.2 V574.4Z" stroke="none"/><circle cx="242.5" cy="570.8" r="5.4" stroke="none"/><rect x="199.8" y="557.6" width="7.6" height="7.2" stroke="none"/><circle cx="212.8" cy="580.6" r="3.5" stroke="none"/><path d="M207,561.2 H211 C216,561.2 218,570.8 226,570.8" stroke-width="1.4" fill="none"/><path d="M215.5,580.6 H219 C225,580.6 227,570.8 234,570.8" stroke-width="1.4" fill="none"/></g><path d="M51.2,567.4 L58.8,568 L57.6,570.6 L64.6,574.8 L56,573.6 L57.4,571.2Z" fill="#f7e018"/><line x1="416.35" y1="358.12" x2="493.6" y2="473.6" stroke="#0b9fd9" stroke-width="4.3" stroke-linecap="round"/><line x1="449.53" y1="308.35" x2="680.5" y2="579.1" stroke="#33373a" stroke-width="4.3" stroke-linecap="round"/><line x1="582.25" y1="308.35" x2="582.25" y2="374.71" stroke="#e82121" stroke-width="4.3" stroke-linecap="round"/><line x1="565.66" y1="374.71" x2="570" y2="788" stroke="#e82121" stroke-width="4.3" stroke-linecap="round"/><line x1="615.43" y1="275.17" x2="702.8" y2="474" stroke="#8a2fa8" stroke-width="4.3" stroke-linecap="round"/><rect x="993" y="0" width="839" height="831" fill="#f9f9f9"/><rect x="994" y="40" width="250" height="80" fill="#ffffff"/><rect x="993" y="0" width="839" height="39.5" fill="#f0f0f2"/><rect x="993" y="39" width="839" height="1.6" fill="#e1e3e8"/><rect x="993" y="800" width="839" height="31" fill="#f0f0f2"/><rect x="994" y="799.4" width="250" height="1" fill="#f1f1f3"/><rect x="1244" y="799" width="588" height="1.2" fill="#dcdde0"/><rect x="993" y="830" width="839" height="1" fill="#e4e5e8"/><rect x="993" y="0" width="1.2" height="831" fill="#dfe2e8"/><rect x="1244" y="0" width="1" height="800" fill="#dcdde0"/><text x="1010.2" y="18.7" font-size="14.5" fill="#222b33">圖塊</text><rect x="994.3" y="40.2" width="124.6" height="25" rx="12.5" fill="#e9edf2"/><circle cx="1005.9" cy="51.9" r="7.5" fill="#4c97ff" stroke="#3d7fd8" stroke-width="0.9"/><text x="1022.6" y="58.1" font-size="13.3" fill="#5d647a">輸出</text><circle cx="1005.9" cy="77" r="7.5" fill="#9966ff" stroke="#8052dc" stroke-width="0.9"/><text x="1022.6" y="83.2" font-size="13.3" fill="#5d647a">輸入</text><circle cx="1005.9" cy="102" r="7.5" fill="#8e8e8e" stroke="#7a7a7a" stroke-width="0.9"/><text x="1022.6" y="108.2" font-size="13.3" fill="#5d647a">標記符號</text><circle cx="1130.9" cy="51.9" r="7.5" fill="#ffab19" stroke="#dc9212" stroke-width="0.9"/><text x="1147.7" y="58.1" font-size="13.3" fill="#5d647a">控制</text><circle cx="1130.9" cy="77" r="7.5" fill="#40bf4a" stroke="#35a53e" stroke-width="0.9"/><text x="1147.7" y="83.2" font-size="13.3" fill="#5d647a">數學</text><circle cx="1130.9" cy="102" r="7.5" fill="#d65cd6" stroke="#b94db9" stroke-width="0.9"/><text x="1147.7" y="108.2" font-size="13.3" fill="#5d647a">變數</text><rect x="1262.2" y="-8" width="37.5" height="38.6" rx="3.5" fill="#f2f2f4" stroke="#e3e5ea" stroke-width="1.1"/><rect x="1308" y="-8" width="37.5" height="38.6" rx="3.5" fill="#f2f2f4" stroke="#e3e5ea" stroke-width="1.1"/><rect x="1354.2" y="-8" width="37.5" height="38.6" rx="3.5" fill="#f2f2f4" stroke="#e3e5ea" stroke-width="1.1"/><path d="M1278.9,9 H1283.3 V14.2 H1286.4 L1281.1,21.2 L1275.8,14.2 H1278.9Z" fill="#000"/><rect x="1272" y="21.9" width="18" height="2.2" fill="#000"/><path d="M1322,7 H1332.3 L1336,12.6 V22.8 H1318 V12.6Z" fill="#8f9bab"/><path d="M1321.4,9.7 H1332.9 M1320,12 H1334.3" stroke="#f2f2f4" stroke-width="0.75" fill="none"/><rect x="1322.9" y="15.8" width="8.1" height="1.35" fill="#f2f2f4"/><g fill="#8f9bab" stroke="#8f9bab"><path stroke="none" d="M1372.9,8.6 C1375.4,8.6 1375.6,11 1375.6,12 C1377.3,13.5 1377.8,15.5 1377.8,17.5 C1377.8,21 1375.8,23.6 1372.9,23.6 C1370,23.6 1368,21 1368,17.5 C1368,15.5 1368.5,13.5 1370.2,12 C1370.2,11 1370.4,8.6 1372.9,8.6Z"/><path d="M1371.6,9.4 L1369.4,6.2 M1374.2,9.4 L1376.5,6.2 M1370,13.2 L1366.9,11.3 M1375.8,13.2 L1378.9,11.3 M1368.6,16.6 L1364.9,17.2 M1377.2,16.6 L1380.9,17.2 M1368.8,19.6 L1366,21.7 M1377,19.6 L1379.8,21.7" stroke-width="1.15" fill="none" stroke-linecap="round"/></g><rect x="1372.5" y="19.2" width="0.8" height="4" fill="#c9ced8"/><rect x="1636.4" y="0" width="0.9" height="39" fill="#e4e6ea"/><defs><filter id="sh" x="-10%" y="-30%" width="120%" height="180%"><feGaussianBlur stdDeviation="2.2"/></filter></defs><rect x="1645" y="-6" width="184" height="37" rx="3" fill="#9aa4b3" opacity="0.45" filter="url(#sh)"/><rect x="1644" y="-8" width="186.2" height="37.6" rx="3" fill="#f2f2f4"/><text x="1654.4" y="20" font-size="15.3" fill="#434b52" textLength="125" lengthAdjust="spacingAndGlyphs">1 (Arduino Uno R3)</text><path d="M1805.7,12.9 H1814.2 L1809.95,17.3Z" fill="#111"/><circle cx="1796" cy="592.6" r="17.2" fill="#fdfdfd" stroke="#dadada" stroke-width="1.5"/><circle cx="1795.4" cy="592" r="6.4" fill="none" stroke="#6b7392" stroke-width="1.3"/><path d="M1800.2,596.8 L1803.6,600.2" stroke="#6b7392" stroke-width="1.5" stroke-linecap="round"/><rect x="1792.4" y="591.35" width="6" height="1.3" fill="#6b7392"/><rect x="1794.75" y="589" width="1.3" height="6" fill="#6b7392"/><circle cx="1796" cy="636.2" r="17.2" fill="#fdfdfd" stroke="#dadada" stroke-width="1.5"/><circle cx="1795.4" cy="635.6" r="6.4" fill="none" stroke="#6b7392" stroke-width="1.3"/><path d="M1800.2,640.4 L1803.6,643.8" stroke="#6b7392" stroke-width="1.5" stroke-linecap="round"/><rect x="1792.4" y="634.95" width="6" height="1.3" fill="#6b7392"/><circle cx="1796" cy="679.8" r="17.2" fill="#fdfdfd" stroke="#dadada" stroke-width="1.5"/><rect x="1791" y="676.2" width="10" height="1.5" fill="#6b7392"/><rect x="1791" y="682" width="10" height="1.5" fill="#6b7392"/><path d="M1761,718.3 H1772 L1774,716.3 H1790 L1792,718.3 H1803 V724.8 H1761Z" fill="#cccccc"/><path d="M1764,727.5 H1800 V765.5 Q1800,769.5 1796,769.5 H1768 Q1764,769.5 1764,765.5Z" fill="#cccccc"/><rect x="1364" y="792" width="382" height="5.8" rx="2.9" fill="#cccccc"/><rect x="1828" y="224.6" width="5.8" height="431" rx="2.9" fill="#cccccc"/><rect x="1003.6" y="807.6" width="20.6" height="14.4" rx="1.5" fill="none" stroke="#111" stroke-width="1.6"/><rect x="1003.6" y="807.6" width="20.6" height="3.6" fill="#111"/><rect x="1017.6" y="811.2" width="1.5" height="10.8" fill="#111"/><rect x="1019" y="817.8" width="5.2" height="1.4" fill="#111"/><rect x="1019" y="819.2" width="5.2" height="2.8" fill="none"/><rect x="1005.6" y="808.7" width="1.4" height="1.3" fill="#fff"/><rect x="1008" y="808.7" width="1.4" height="1.3" fill="#fff"/><rect x="1010.4" y="808.7" width="1.4" height="1.3" fill="#fff"/><text x="1034" y="819" font-size="13.8" fill="#2e3f4f">串列監視器</text><path d="M1818,815.6 H1826.4 L1822.2,811.2Z" fill="#111"/><defs><clipPath id="pc"><rect x="994" y="120" width="248" height="680"/></clipPath></defs><g clip-path="url(#pc)"><path transform="translate(1002.75,131) scale(0.75)" d="m 0,4 A 4,4 0 0,1 4,0 H 12 c 2,0 3,1 4,2 l 4,4 c 1,1 2,2 4,2 h 12 c 2,0 3,-1 4,-2 l 4,-4 c 1,-1 2,-2 4,-2 H 198.55 a 4,4 0 0,1 4,4 V 44 a 4,4 0 0,1 -4,4 H 48 c -2,0 -3,1 -4,2 l -4,4 c -1,1 -2,2 -4,2 h -12 c -2,0 -3,-1 -4,-2 l -4,-4 c -1,-1 -2,-2 -4,-2 H 4 a 4,4 0 0,1 -4,-4 z" fill="#4c97ff" stroke="#3373cc" stroke-width="1"/><text x="1008.75" y="154.22" font-size="12" fill="#ffffff" stroke="#ffffff" stroke-width="0.35">將內建</text><text x="1044.75" y="154.52" font-size="12" fill="#ffffff" xml:space="preserve" stroke="#ffffff" stroke-width="0.3"> LED </text><text x="1074.76" y="154.22" font-size="12" fill="#ffffff" stroke="#ffffff" stroke-width="0.35">設為</text><rect x="1104.76" y="137" width="43.9" height="24" rx="3" fill="#4c97ff" stroke="#3373cc" stroke-width="0.75"/><text x="1113.36" y="153.62" font-size="12" fill="#ffffff" stroke="#ffffff" stroke-width="0.35">高</text><path transform="translate(1130.76,146.8) scale(0.75)" d="M6.36,7.79a1.43,1.43,0,0,1-1-.42L1.42,3.45a1.44,1.44,0,0,1,0-2c0.56-.56,9.31-0.56,9.87,0a1.44,1.44,0,0,1,0,2L7.37,7.37A1.43,1.43,0,0,1,6.36,7.79Z" fill="#fff"/><path transform="translate(1002.75,182) scale(0.75)" d="m 0,4 A 4,4 0 0,1 4,0 H 12 c 2,0 3,1 4,2 l 4,4 c 1,1 2,2 4,2 h 12 c 2,0 3,-1 4,-2 l 4,-4 c 1,-1 2,-2 4,-2 H 225.96 a 4,4 0 0,1 4,4 V 44 a 4,4 0 0,1 -4,4 H 48 c -2,0 -3,1 -4,2 l -4,4 c -1,1 -2,2 -4,2 h -12 c -2,0 -3,-1 -4,-2 l -4,-4 c -1,-1 -2,-2 -4,-2 H 4 a 4,4 0 0,1 -4,-4 z" fill="#4c97ff" stroke="#3373cc" stroke-width="1"/><text x="1008.75" y="205.22" font-size="12" fill="#ffffff" stroke="#ffffff" stroke-width="0.35">將接腳</text><rect x="1050.75" y="188" width="38.57" height="24" rx="3" fill="#4c97ff" stroke="#3373cc" stroke-width="0.75"/><text x="1059.35" y="204.92" font-size="12" fill="#ffffff" xml:space="preserve" stroke="#ffffff" stroke-width="0.3">0</text><path transform="translate(1071.42,197.8) scale(0.75)" d="M6.36,7.79a1.43,1.43,0,0,1-1-.42L1.42,3.45a1.44,1.44,0,0,1,0-2c0.56-.56,9.31-0.56,9.87,0a1.44,1.44,0,0,1,0,2L7.37,7.37A1.43,1.43,0,0,1,6.36,7.79Z" fill="#fff"/><text x="1095.32" y="205.22" font-size="12" fill="#ffffff" stroke="#ffffff" stroke-width="0.35">設為</text><rect x="1125.32" y="188" width="43.9" height="24" rx="3" fill="#4c97ff" stroke="#3373cc" stroke-width="0.75"/><text x="1133.92" y="204.62" font-size="12" fill="#ffffff" stroke="#ffffff" stroke-width="0.35">高</text><path transform="translate(1151.32,197.8) scale(0.75)" d="M6.36,7.79a1.43,1.43,0,0,1-1-.42L1.42,3.45a1.44,1.44,0,0,1,0-2c0.56-.56,9.31-0.56,9.87,0a1.44,1.44,0,0,1,0,2L7.37,7.37A1.43,1.43,0,0,1,6.36,7.79Z" fill="#fff"/><path transform="translate(1002.75,233) scale(0.75)" d="m 0,4 A 4,4 0 0,1 4,0 H 12 c 2,0 3,1 4,2 l 4,4 c 1,1 2,2 4,2 h 12 c 2,0 3,-1 4,-2 l 4,-4 c 1,-1 2,-2 4,-2 H 207.43 a 4,4 0 0,1 4,4 V 44 a 4,4 0 0,1 -4,4 H 48 c -2,0 -3,1 -4,2 l -4,4 c -1,1 -2,2 -4,2 h -12 c -2,0 -3,-1 -4,-2 l -4,-4 c -1,-1 -2,-2 -4,-2 H 4 a 4,4 0 0,1 -4,-4 z" fill="#4c97ff" stroke="#3373cc" stroke-width="1"/><text x="1008.75" y="256.22" font-size="12" fill="#ffffff" stroke="#ffffff" stroke-width="0.35">將接腳</text><rect x="1050.75" y="239" width="38.57" height="24" rx="3" fill="#4c97ff" stroke="#3373cc" stroke-width="0.75"/><text x="1059.35" y="255.92" font-size="12" fill="#ffffff" xml:space="preserve" stroke="#ffffff" stroke-width="0.3">3</text><path transform="translate(1071.42,248.8) scale(0.75)" d="M6.36,7.79a1.43,1.43,0,0,1-1-.42L1.42,3.45a1.44,1.44,0,0,1,0-2c0.56-.56,9.31-0.56,9.87,0a1.44,1.44,0,0,1,0,2L7.37,7.37A1.43,1.43,0,0,1,6.36,7.79Z" fill="#fff"/><text x="1095.32" y="256.22" font-size="12" fill="#ffffff" stroke="#ffffff" stroke-width="0.35">設為</text><rect x="1125.32" y="239" width="30" height="24" rx="12" fill="#fff" stroke="#3373cc" stroke-width="0.75"/><text x="1140.32" y="255.9" font-size="12" fill="#575e75" text-anchor="middle">0</text><path transform="translate(1002.75,284) scale(0.75)" d="m 0,4 A 4,4 0 0,1 4,0 H 12 c 2,0 3,1 4,2 l 4,4 c 1,1 2,2 4,2 h 12 c 2,0 3,-1 4,-2 l 4,-4 c 1,-1 2,-2 4,-2 H 311.43 a 4,4 0 0,1 4,4 V 44 a 4,4 0 0,1 -4,4 H 48 c -2,0 -3,1 -4,2 l -4,4 c -1,1 -2,2 -4,2 h -12 c -2,0 -3,-1 -4,-2 l -4,-4 c -1,-1 -2,-2 -4,-2 H 4 a 4,4 0 0,1 -4,-4 z" fill="#4c97ff" stroke="#3373cc" stroke-width="1"/><text x="1008.75" y="307.22" font-size="12" fill="#ffffff" stroke="#ffffff" stroke-width="0.35">將接腳</text><rect x="1050.75" y="290" width="38.57" height="24" rx="3" fill="#4c97ff" stroke="#3373cc" stroke-width="0.75"/><text x="1059.35" y="306.92" font-size="12" fill="#ffffff" xml:space="preserve" stroke="#ffffff" stroke-width="0.3">0</text><path transform="translate(1071.42,299.8) scale(0.75)" d="M6.36,7.79a1.43,1.43,0,0,1-1-.42L1.42,3.45a1.44,1.44,0,0,1,0-2c0.56-.56,9.31-0.56,9.87,0a1.44,1.44,0,0,1,0,2L7.37,7.37A1.43,1.43,0,0,1,6.36,7.79Z" fill="#fff"/><text x="1095.32" y="307.22" font-size="12" fill="#ffffff" stroke="#ffffff" stroke-width="0.35">上的伺服機旋轉</text><rect x="1185.32" y="290" width="30" height="24" rx="12" fill="#fff" stroke="#3373cc" stroke-width="0.75"/><text x="1200.32" y="306.9" font-size="12" fill="#575e75" text-anchor="middle">0</text><text x="1221.32" y="307.22" font-size="12" fill="#ffffff" stroke="#ffffff" stroke-width="0.35">度</text><path transform="translate(1002.75,335) scale(0.75)" d="m 0,4 A 4,4 0 0,1 4,0 H 12 c 2,0 3,1 4,2 l 4,4 c 1,1 2,2 4,2 h 12 c 2,0 3,-1 4,-2 l 4,-4 c 1,-1 2,-2 4,-2 H 391.43 a 4,4 0 0,1 4,4 V 44 a 4,4 0 0,1 -4,4 H 48 c -2,0 -3,1 -4,2 l -4,4 c -1,1 -2,2 -4,2 h -12 c -2,0 -3,-1 -4,-2 l -4,-4 c -1,-1 -2,-2 -4,-2 H 4 a 4,4 0 0,1 -4,-4 z" fill="#4c97ff" stroke="#3373cc" stroke-width="1"/><text x="1008.75" y="358.22" font-size="12" fill="#ffffff" stroke="#ffffff" stroke-width="0.35">在接腳</text><rect x="1050.75" y="341" width="38.57" height="24" rx="3" fill="#4c97ff" stroke="#3373cc" stroke-width="0.75"/><text x="1059.35" y="357.92" font-size="12" fill="#ffffff" xml:space="preserve" stroke="#ffffff" stroke-width="0.3">0</text><path transform="translate(1071.42,350.8) scale(0.75)" d="M6.36,7.79a1.43,1.43,0,0,1-1-.42L1.42,3.45a1.44,1.44,0,0,1,0-2c0.56-.56,9.31-0.56,9.87,0a1.44,1.44,0,0,1,0,2L7.37,7.37A1.43,1.43,0,0,1,6.36,7.79Z" fill="#fff"/><text x="1095.32" y="358.22" font-size="12" fill="#ffffff" stroke="#ffffff" stroke-width="0.35">上的喇叭播放音調</text><rect x="1197.32" y="341" width="30" height="24" rx="12" fill="#fff" stroke="#3373cc" stroke-width="0.75"/><text x="1212.32" y="357.9" font-size="12" fill="#575e75" text-anchor="middle">60</text><text x="1233.32" y="358.22" font-size="12" fill="#ffffff" stroke="#ffffff" stroke-width="0.35">長度</text><rect x="1263.32" y="341" width="30" height="24" rx="12" fill="#fff" stroke="#3373cc" stroke-width="0.75"/><text x="1278.32" y="357.9" font-size="12" fill="#575e75" text-anchor="middle">1</text><path transform="translate(1002.75,386) scale(0.75)" d="m 0,4 A 4,4 0 0,1 4,0 H 12 c 2,0 3,1 4,2 l 4,4 c 1,1 2,2 4,2 h 12 c 2,0 3,-1 4,-2 l 4,-4 c 1,-1 2,-2 4,-2 H 207.43 a 4,4 0 0,1 4,4 V 44 a 4,4 0 0,1 -4,4 H 48 c -2,0 -3,1 -4,2 l -4,4 c -1,1 -2,2 -4,2 h -12 c -2,0 -3,-1 -4,-2 l -4,-4 c -1,-1 -2,-2 -4,-2 H 4 a 4,4 0 0,1 -4,-4 z" fill="#4c97ff" stroke="#3373cc" stroke-width="1"/><text x="1008.75" y="409.22" font-size="12" fill="#ffffff" stroke="#ffffff" stroke-width="0.35">關閉接腳</text><rect x="1062.75" y="392" width="38.57" height="24" rx="3" fill="#4c97ff" stroke="#3373cc" stroke-width="0.75"/><text x="1071.35" y="408.92" font-size="12" fill="#ffffff" xml:space="preserve" stroke="#ffffff" stroke-width="0.3">0</text><path transform="translate(1083.42,401.8) scale(0.75)" d="M6.36,7.79a1.43,1.43,0,0,1-1-.42L1.42,3.45a1.44,1.44,0,0,1,0-2c0.56-.56,9.31-0.56,9.87,0a1.44,1.44,0,0,1,0,2L7.37,7.37A1.43,1.43,0,0,1,6.36,7.79Z" fill="#fff"/><text x="1107.32" y="409.22" font-size="12" fill="#ffffff" stroke="#ffffff" stroke-width="0.35">上的喇叭</text><path transform="translate(1002.75,437) scale(0.75)" d="m 0,4 A 4,4 0 0,1 4,0 H 12 c 2,0 3,1 4,2 l 4,4 c 1,1 2,2 4,2 h 12 c 2,0 3,-1 4,-2 l 4,-4 c 1,-1 2,-2 4,-2 H 360.35 a 4,4 0 0,1 4,4 V 44 a 4,4 0 0,1 -4,4 H 48 c -2,0 -3,1 -4,2 l -4,4 c -1,1 -2,2 -4,2 h -12 c -2,0 -3,-1 -4,-2 l -4,-4 c -1,-1 -2,-2 -4,-2 H 4 a 4,4 0 0,1 -4,-4 z" fill="#4c97ff" stroke="#3373cc" stroke-width="1"/><text x="1008.75" y="460.22" font-size="12" fill="#ffffff" stroke="#ffffff" stroke-width="0.35">列印到串列監視器</text><rect x="1110.75" y="443" width="73.36" height="24" rx="12" fill="#fff" stroke="#3373cc" stroke-width="0.75"/><text x="1147.43" y="459.9" font-size="12" fill="#575e75" text-anchor="middle">hello world</text><rect x="1190.11" y="443" width="79.9" height="24" rx="3" fill="#4c97ff" stroke="#3373cc" stroke-width="0.75"/><text x="1198.71" y="459.62" font-size="12" fill="#ffffff" stroke="#ffffff" stroke-width="0.35">包含以下</text><path transform="translate(1252.11,452.8) scale(0.75)" d="M6.36,7.79a1.43,1.43,0,0,1-1-.42L1.42,3.45a1.44,1.44,0,0,1,0-2c0.56-.56,9.31-0.56,9.87,0a1.44,1.44,0,0,1,0,2L7.37,7.37A1.43,1.43,0,0,1,6.36,7.79Z" fill="#fff"/><path transform="translate(1002.75,488) scale(0.75)" d="m 0,4 A 4,4 0 0,1 4,0 H 12 c 2,0 3,1 4,2 l 4,4 c 1,1 2,2 4,2 h 12 c 2,0 3,-1 4,-2 l 4,-4 c 1,-1 2,-2 4,-2 H 330.75 a 4,4 0 0,1 4,4 V 44 a 4,4 0 0,1 -4,4 H 48 c -2,0 -3,1 -4,2 l -4,4 c -1,1 -2,2 -4,2 h -12 c -2,0 -3,-1 -4,-2 l -4,-4 c -1,-1 -2,-2 -4,-2 H 4 a 4,4 0 0,1 -4,-4 z" fill="#4c97ff" stroke="#3373cc" stroke-width="1"/><text x="1008.75" y="511.22" font-size="12" fill="#ffffff" stroke="#ffffff" stroke-width="0.35">將接腳</text><rect x="1050.75" y="494" width="38.57" height="24" rx="3" fill="#4c97ff" stroke="#3373cc" stroke-width="0.75"/><text x="1059.35" y="510.92" font-size="12" fill="#ffffff" xml:space="preserve" stroke="#ffffff" stroke-width="0.3">3</text><path transform="translate(1071.42,503.8) scale(0.75)" d="M6.36,7.79a1.43,1.43,0,0,1-1-.42L1.42,3.45a1.44,1.44,0,0,1,0-2c0.56-.56,9.31-0.56,9.87,0a1.44,1.44,0,0,1,0,2L7.37,7.37A1.43,1.43,0,0,1,6.36,7.79Z" fill="#fff"/><rect x="1100.32" y="494" width="38.57" height="24" rx="3" fill="#4c97ff" stroke="#3373cc" stroke-width="0.75"/><text x="1108.92" y="510.92" font-size="12" fill="#ffffff" xml:space="preserve" stroke="#ffffff" stroke-width="0.3">3</text><path transform="translate(1121,503.8) scale(0.75)" d="M6.36,7.79a1.43,1.43,0,0,1-1-.42L1.42,3.45a1.44,1.44,0,0,1,0-2c0.56-.56,9.31-0.56,9.87,0a1.44,1.44,0,0,1,0,2L7.37,7.37A1.43,1.43,0,0,1,6.36,7.79Z" fill="#fff"/><rect x="1149.9" y="494" width="38.57" height="24" rx="3" fill="#4c97ff" stroke="#3373cc" stroke-width="0.75"/><text x="1158.5" y="510.92" font-size="12" fill="#ffffff" xml:space="preserve" stroke="#ffffff" stroke-width="0.3">3</text><path transform="translate(1170.57,503.8) scale(0.75)" d="M6.36,7.79a1.43,1.43,0,0,1-1-.42L1.42,3.45a1.44,1.44,0,0,1,0-2c0.56-.56,9.31-0.56,9.87,0a1.44,1.44,0,0,1,0,2L7.37,7.37A1.43,1.43,0,0,1,6.36,7.79Z" fill="#fff"/><text x="1194.47" y="511.22" font-size="12" fill="#ffffff" stroke="#ffffff" stroke-width="0.35">中的</text><text x="1218.47" y="511.52" font-size="12" fill="#ffffff" xml:space="preserve" stroke="#ffffff" stroke-width="0.3"> RGB</text></g><path transform="translate(1355.3,272.9) scale(0.75)" d="m 0,4 A 4,4 0 0,1 4,0 H 12 c 2,0 3,1 4,2 l 4,4 c 1,1 2,2 4,2 h 12 c 2,0 3,-1 4,-2 l 4,-4 c 1,-1 2,-2 4,-2 H 407.07 a 4,4 0 0,1 4,4 v 48 a 4,4 0 0,1 -4,4 H 64 c -2,0 -3,1 -4,2 l -4,4 c -1,1 -2,2 -4,2 h -12 c -2,0 -3,-1 -4,-2 l -4,-4 c -1,-1 -2,-2 -4,-2 h -8 a 4,4 0 0,0 -4,4 v 40 a 4,4 0 0,0 4,4 h 8 c 2,0 3,1 4,2 l 4,4 c 1,1 2,2 4,2 h 12 c 2,0 3,-1 4,-2 l 4,-4 c 1,-1 2,-2 4,-2 H 407.07 a 4,4 0 0,1 4,4 v 24 a 4,4 0 0,1 -4,4 H 64 c -2,0 -3,1 -4,2 l -4,4 c -1,1 -2,2 -4,2 h -12 c -2,0 -3,-1 -4,-2 l -4,-4 c -1,-1 -2,-2 -4,-2 h -8 a 4,4 0 0,0 -4,4 v 40 a 4,4 0 0,0 4,4 h 8 c 2,0 3,1 4,2 l 4,4 c 1,1 2,2 4,2 h 12 c 2,0 3,-1 4,-2 l 4,-4 c 1,-1 2,-2 4,-2 H 407.07 a 4,4 0 0,1 4,4 v 24 a 4,4 0 0,1 -4,4 H 48 c -2,0 -3,1 -4,2 l -4,4 c -1,1 -2,2 -4,2 h -12 c -2,0 -3,-1 -4,-2 l -4,-4 c -1,-1 -2,-2 -4,-2 H 4 a 4,4 0 0,1 -4,-4 z" fill="#ffab19" stroke="#cf8b17" stroke-width="1"/><text x="1361.7" y="299.32" font-size="12" fill="#ffffff" stroke="#ffffff" stroke-width="0.35">如果</text><path d="M1391.4,294.2 L1409.4,276.2 H1621.6 L1639.6,294.2 L1621.6,312.2 H1409.4 Z" fill="#59c059" stroke="#389438" stroke-width="0.75"/><rect x="1409.4" y="279.2" width="134.6" height="30" rx="15" fill="#9966ff" stroke="#774dcb" stroke-width="0.75"/><text x="1418.6" y="299.32" font-size="12" fill="#ffffff" stroke="#ffffff" stroke-width="0.35">讀取數位接腳</text><rect x="1496.3" y="282.2" width="38.57" height="24" rx="3" fill="#9966ff" stroke="#774dcb" stroke-width="0.75"/><text x="1504.9" y="299.12" font-size="12" fill="#ffffff" xml:space="preserve" stroke="#ffffff" stroke-width="0.3">2</text><path transform="translate(1516.97,292) scale(0.75)" d="M6.36,7.79a1.43,1.43,0,0,1-1-.42L1.42,3.45a1.44,1.44,0,0,1,0-2c0.56-.56,9.31-0.56,9.87,0a1.44,1.44,0,0,1,0,2L7.37,7.37A1.43,1.43,0,0,1,6.36,7.79Z" fill="#fff"/><rect x="1549.7" y="282.2" width="38.91" height="24" rx="3" fill="#59c059" stroke="#389438" stroke-width="0.75"/><text x="1558.3" y="299.12" font-size="12" fill="#ffffff" xml:space="preserve" stroke="#ffffff" stroke-width="0.3">=</text><path transform="translate(1570.71,292) scale(0.75)" d="M6.36,7.79a1.43,1.43,0,0,1-1-.42L1.42,3.45a1.44,1.44,0,0,1,0-2c0.56-.56,9.31-0.56,9.87,0a1.44,1.44,0,0,1,0,2L7.37,7.37A1.43,1.43,0,0,1,6.36,7.79Z" fill="#fff"/><rect x="1594.6" y="282.2" width="30" height="24" rx="12" fill="#fff" stroke="#389438" stroke-width="0.75"/><text x="1609.6" y="299.1" font-size="12" fill="#575e75" text-anchor="middle">1</text><text x="1645.5" y="299.32" font-size="12" fill="#ffffff" stroke="#ffffff" stroke-width="0.35">則</text><text x="1361.7" y="368.12" font-size="12" fill="#ffffff" stroke="#ffffff" stroke-width="0.35">否則</text><path transform="translate(1367.6,314.9) scale(0.75)" d="m 0,4 A 4,4 0 0,1 4,0 H 12 c 2,0 3,1 4,2 l 4,4 c 1,1 2,2 4,2 h 12 c 2,0 3,-1 4,-2 l 4,-4 c 1,-1 2,-2 4,-2 H 225.96 a 4,4 0 0,1 4,4 V 44 a 4,4 0 0,1 -4,4 H 48 c -2,0 -3,1 -4,2 l -4,4 c -1,1 -2,2 -4,2 h -12 c -2,0 -3,-1 -4,-2 l -4,-4 c -1,-1 -2,-2 -4,-2 H 4 a 4,4 0 0,1 -4,-4 z" fill="#4c97ff" stroke="#3373cc" stroke-width="1"/><text x="1374" y="338.12" font-size="12" fill="#ffffff" stroke="#ffffff" stroke-width="0.35">將接腳</text><rect x="1416" y="320.9" width="38.57" height="24" rx="3" fill="#4c97ff" stroke="#3373cc" stroke-width="0.75"/><text x="1424.6" y="337.82" font-size="12" fill="#ffffff" xml:space="preserve" stroke="#ffffff" stroke-width="0.3">8</text><path transform="translate(1436.67,330.7) scale(0.75)" d="M6.36,7.79a1.43,1.43,0,0,1-1-.42L1.42,3.45a1.44,1.44,0,0,1,0-2c0.56-.56,9.31-0.56,9.87,0a1.44,1.44,0,0,1,0,2L7.37,7.37A1.43,1.43,0,0,1,6.36,7.79Z" fill="#fff"/><text x="1460.57" y="338.12" font-size="12" fill="#ffffff" stroke="#ffffff" stroke-width="0.35">設為</text><rect x="1490.57" y="320.9" width="43.9" height="24" rx="3" fill="#4c97ff" stroke="#3373cc" stroke-width="0.75"/><text x="1499.17" y="337.52" font-size="12" fill="#ffffff" stroke="#ffffff" stroke-width="0.35">高</text><path transform="translate(1516.57,330.7) scale(0.75)" d="M6.36,7.79a1.43,1.43,0,0,1-1-.42L1.42,3.45a1.44,1.44,0,0,1,0-2c0.56-.56,9.31-0.56,9.87,0a1.44,1.44,0,0,1,0,2L7.37,7.37A1.43,1.43,0,0,1,6.36,7.79Z" fill="#fff"/><path transform="translate(1367.6,374.9) scale(0.75)" d="m 0,4 A 4,4 0 0,1 4,0 H 12 c 2,0 3,1 4,2 l 4,4 c 1,1 2,2 4,2 h 12 c 2,0 3,-1 4,-2 l 4,-4 c 1,-1 2,-2 4,-2 H 225.96 a 4,4 0 0,1 4,4 V 44 a 4,4 0 0,1 -4,4 H 48 c -2,0 -3,1 -4,2 l -4,4 c -1,1 -2,2 -4,2 h -12 c -2,0 -3,-1 -4,-2 l -4,-4 c -1,-1 -2,-2 -4,-2 H 4 a 4,4 0 0,1 -4,-4 z" fill="#4c97ff" stroke="#3373cc" stroke-width="1"/><text x="1374" y="398.12" font-size="12" fill="#ffffff" stroke="#ffffff" stroke-width="0.35">將接腳</text><rect x="1416" y="380.9" width="38.57" height="24" rx="3" fill="#4c97ff" stroke="#3373cc" stroke-width="0.75"/><text x="1424.6" y="397.82" font-size="12" fill="#ffffff" xml:space="preserve" stroke="#ffffff" stroke-width="0.3">8</text><path transform="translate(1436.67,390.7) scale(0.75)" d="M6.36,7.79a1.43,1.43,0,0,1-1-.42L1.42,3.45a1.44,1.44,0,0,1,0-2c0.56-.56,9.31-0.56,9.87,0a1.44,1.44,0,0,1,0,2L7.37,7.37A1.43,1.43,0,0,1,6.36,7.79Z" fill="#fff"/><text x="1460.57" y="398.12" font-size="12" fill="#ffffff" stroke="#ffffff" stroke-width="0.35">設為</text><rect x="1490.57" y="380.9" width="43.9" height="24" rx="3" fill="#4c97ff" stroke="#3373cc" stroke-width="0.75"/><text x="1499.17" y="397.52" font-size="12" fill="#ffffff" stroke="#ffffff" stroke-width="0.35">低</text><path transform="translate(1516.57,390.7) scale(0.75)" d="M6.36,7.79a1.43,1.43,0,0,1-1-.42L1.42,3.45a1.44,1.44,0,0,1,0-2c0.56-.56,9.31-0.56,9.87,0a1.44,1.44,0,0,1,0,2L7.37,7.37A1.43,1.43,0,0,1,6.36,7.79Z" fill="#fff"/><path transform="translate(1355.3,434.9) scale(0.75)" d="m 0,4 A 4,4 0 0,1 4,0 H 12 c 2,0 3,1 4,2 l 4,4 c 1,1 2,2 4,2 h 12 c 2,0 3,-1 4,-2 l 4,-4 c 1,-1 2,-2 4,-2 H 182.56 a 4,4 0 0,1 4,4 V 44 a 4,4 0 0,1 -4,4 H 48 c -2,0 -3,1 -4,2 l -4,4 c -1,1 -2,2 -4,2 h -12 c -2,0 -3,-1 -4,-2 l -4,-4 c -1,-1 -2,-2 -4,-2 H 4 a 4,4 0 0,1 -4,-4 z" fill="#ffab19" stroke="#cf8b17" stroke-width="1"/><text x="1361.9" y="458.12" font-size="12" fill="#ffffff" stroke="#ffffff" stroke-width="0.35">等候</text><rect x="1391.9" y="440.9" width="36.02" height="24" rx="12" fill="#fff" stroke="#cf8b17" stroke-width="0.75"/><text x="1409.91" y="457.8" font-size="12" fill="#575e75" text-anchor="middle">500</text><rect x="1433.92" y="440.9" width="55.9" height="24" rx="3" fill="#ffab19" stroke="#cf8b17" stroke-width="0.75"/><text x="1442.52" y="457.52" font-size="12" fill="#ffffff" stroke="#ffffff" stroke-width="0.35">毫秒</text><path transform="translate(1471.92,450.7) scale(0.75)" d="M6.36,7.79a1.43,1.43,0,0,1-1-.42L1.42,3.45a1.44,1.44,0,0,1,0-2c0.56-.56,9.31-0.56,9.87,0a1.44,1.44,0,0,1,0,2L7.37,7.37A1.43,1.43,0,0,1,6.36,7.79Z" fill="#fff"/></svg></body></html>
